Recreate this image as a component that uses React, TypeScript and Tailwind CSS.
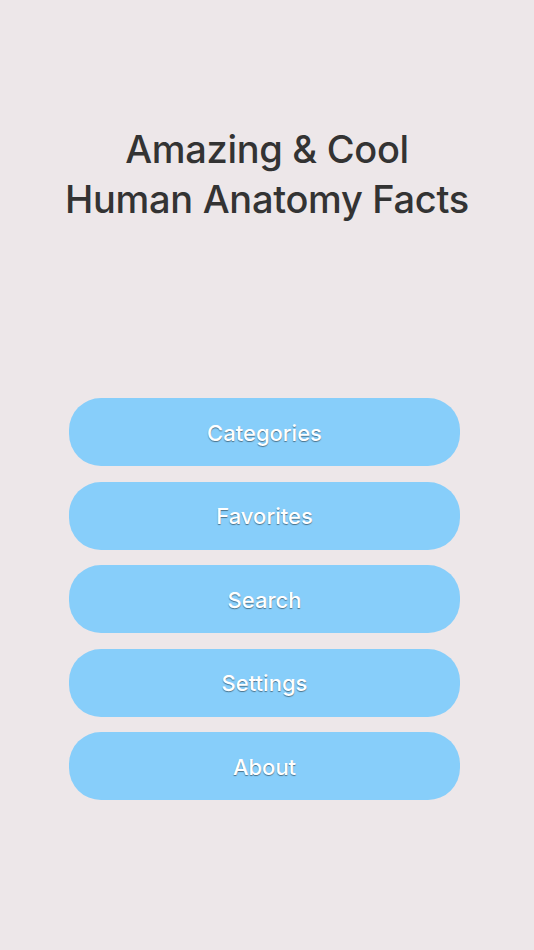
const items = ['Categories', 'Favorites', 'Search', 'Settings', 'About'];

export default function App() {
  return (
    <div
      className="min-h-[950px] bg-[#ede7e9] flex flex-col"
      style={{ fontFamily: 'Inter, "Noto Sans", sans-serif' }}
    >
      <h1 className="mt-[124px] text-center text-[38px] leading-[50px] font-medium text-[#333333] tracking-[-0.3px]">
        Amazing &amp; Cool
        <br />
        Human Anatomy Facts
      </h1>
      <div className="mt-[174px] ml-[69px] flex flex-col gap-[15.5px] w-[391px]">
        {items.map((label) => (
          <button
            key={label}
            className="h-[68px] pt-[2px] rounded-[32px] bg-[#87cefa] text-white text-[22px] font-medium [text-shadow:0_1px_1px_rgba(0,0,0,0.45)]"
          >
            {label}
          </button>
        ))}
      </div>
    </div>
  );
}
